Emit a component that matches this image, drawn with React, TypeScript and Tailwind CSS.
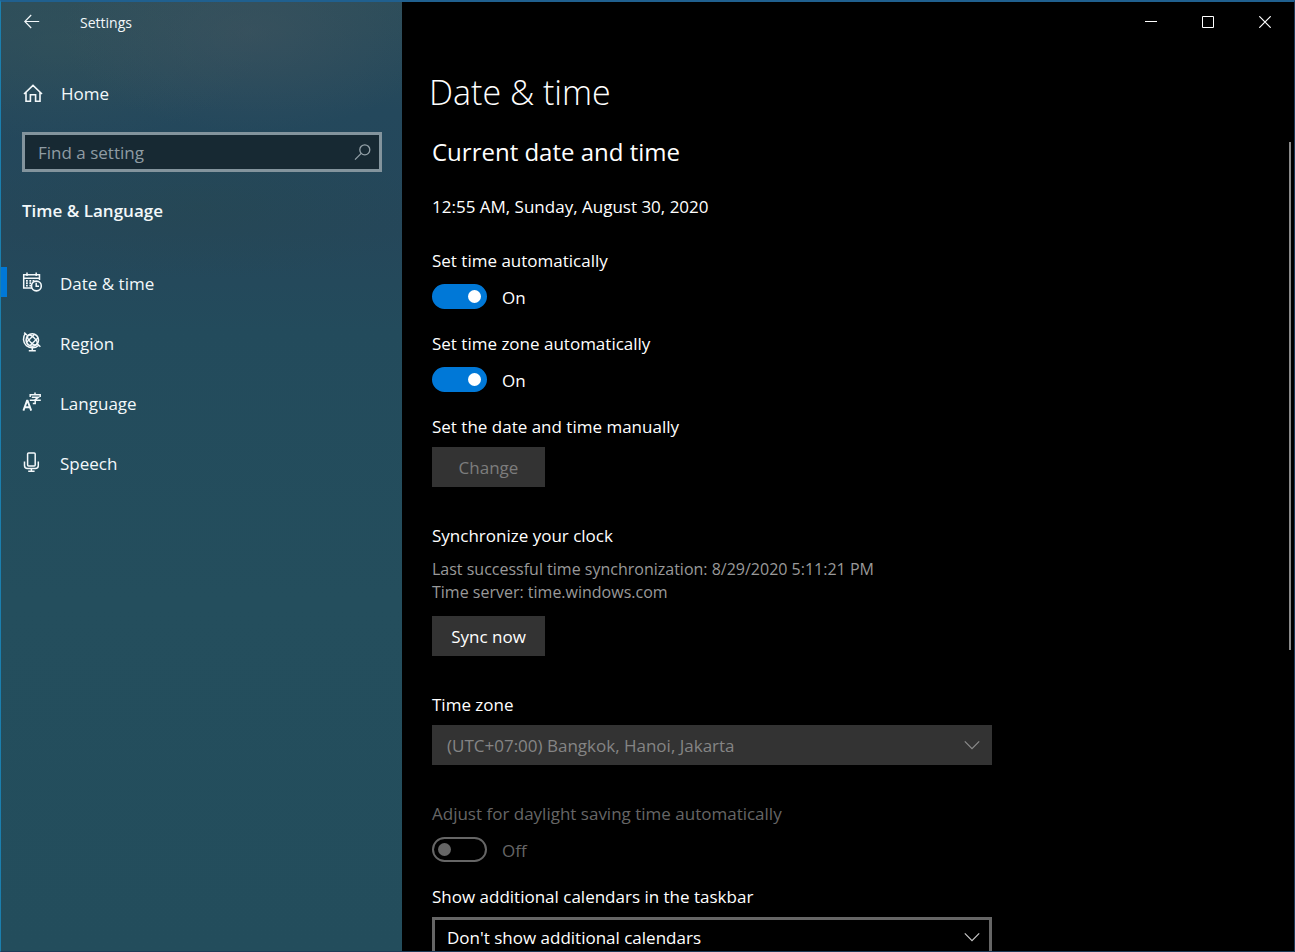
import type { ReactNode } from "react";

function Svg({ size, children }: { size: number; children: ReactNode }) {
  return (
    <svg
      width={size}
      height={size}
      viewBox={`0 0 ${size} ${size}`}
      fill="none"
      stroke="currentColor"
      aria-hidden="true"
      className="shrink-0"
    >
      {children}
    </svg>
  );
}

const BackIcon = () => (
  <Svg size={16}>
    <path d="M15.2 7.5H.8M7.2 1L.8 7.5 7.2 14" strokeWidth="1.2" />
  </Svg>
);

const HomeIcon = () => (
  <Svg size={20}>
    <path d="M1 10L10 1.4l9 8.6M3 8.4V17.2h4.4v-6.4h5.2v6.4H17V8.4" strokeWidth="1.6" />
  </Svg>
);

const SearchIcon = () => (
  <Svg size={18}>
    <circle cx="11.8" cy="6.8" r="5" strokeWidth="1.3" />
    <path d="M8.2 10.4L2 16.6" strokeWidth="1.3" />
  </Svg>
);

const CalendarIcon = () => (
  <Svg size={20}>
    <path d="M10 16H1.7V2.7h15.8V8M1.7 6.2h15.8M5 .5v3.6M14.2 .5v3.6" strokeWidth="1.5" />
    <path
      d="M7.4 8.8h1.8M10.6 8.8h1.8M4 8.8h1.8M4 11.2h1.8M7.4 11.2h1.8M4 13.6h1.8M7.4 13.6h1.8"
      strokeWidth="1.7"
    />
    <circle cx="14.4" cy="14" r="4.9" strokeWidth="1.6" />
    <path d="M14.2 10.8v3.4h2.8" strokeWidth="1.5" />
  </Svg>
);

const GlobeIcon = () => (
  <Svg size={20}>
    <circle cx="10.3" cy="8" r="6.2" strokeWidth="1.6" />
    <g transform="rotate(-45 10.3 8)">
      <ellipse cx="10.3" cy="8" rx="2.8" ry="6.2" strokeWidth="1.4" />
      <path d="M4.6 5.6h11.4M4.6 10.4h11.4" strokeWidth="1.4" />
    </g>
    <path d="M3.4 1.4C.6 5 .8 10.6 4.4 13.6c3.6 3 9 3 12.4-.4M2.2 .6l2.8 2.6M15.2 11.8l3.2 3" strokeWidth="1.5" />
    <path d="M10.3 15.4v3M6.8 18.8h7" strokeWidth="1.5" />
  </Svg>
);

const LanguageIcon = () => (
  <Svg size={20}>
    <path d="M1.4 18.6L5 8.8h.6l3.6 9.8M2.8 15.2h5" strokeWidth="1.9" />
    <path d="M13 .6v2.2M8.2 5V2.8h10V5M9.8 5.2h6.6l-3.2 2.4v3.8h-2.4M7.8 8.2h11" strokeWidth="1.5" />
  </Svg>
);

const MicIcon = () => (
  <Svg size={20}>
    <rect x="5.6" y="1" width="7.6" height="13" rx="1" strokeWidth="1.5" />
    <path d="M2.5 9.4v4.2c0 1.8 1.2 3 3 3h7.8c1.8 0 3-1.2 3-3V9.4M9.4 16.6v2.6M6.2 19.2h6.4" strokeWidth="1.5" />
  </Svg>
);

const ChevronIcon = () => (
  <Svg size={16}>
    <path d="M.8 4.4L8 11.6l7.2-7.2" strokeWidth="1.2" />
  </Svg>
);

const navItems = [
  { label: "Date & time", icon: <CalendarIcon />, active: true },
  { label: "Region", icon: <GlobeIcon />, active: false },
  { label: "Language", icon: <LanguageIcon />, active: false },
  { label: "Speech", icon: <MicIcon />, active: false },
];

function Sidebar() {
  return (
    <aside className="flex w-[401px] shrink-0 flex-col bg-[#234c5c] bg-[radial-gradient(ellipse_190px_100px_at_250px_30px,#45566077,transparent),radial-gradient(ellipse_200px_100px_at_60px_40px,#37545a77,transparent),radial-gradient(ellipse_240px_70px_at_200px_205px,#27474c55,transparent),linear-gradient(to_bottom,#2c4d5a_0px,#24485c_110px,#25475a_230px,#234b5c_330px,#244e5d_600px,#234d5c_100%)] text-[#f3f8fa]">
      <header className="flex h-10 items-center">
        <button type="button" aria-label="Back" className="flex h-full items-center pr-10 pl-[23px]">
          <BackIcon />
        </button>
        <span className="pt-0.5 text-sm">Settings</span>
      </header>
      <a href="#home" className="mt-7 flex h-12 items-center gap-[18px] pl-[22px]">
        <HomeIcon />
        Home
      </a>
      <div className="mt-[14px] mr-5 ml-[21px] flex h-10 items-center border-[3px] border-[#83949d] bg-[#172933] pr-2 pl-[13px] text-[#94a1a8]">
        <input
          type="text"
          aria-label="Find a setting"
          placeholder="Find a setting"
          className="min-w-0 flex-1 bg-transparent pt-0.5 outline-none placeholder:text-[#8f9ca3]"
        />
        <SearchIcon />
      </div>
      <h2 className="mt-[27px] pl-[21px] font-semibold">Time &amp; Language</h2>
      <nav className="mt-[29px] flex flex-col">
        {navItems.map((item) => (
          <a
            key={item.label}
            href="#section"
            aria-current={item.active ? "page" : undefined}
            className="flex h-[60px] items-center"
          >
            <span className={item.active ? "h-[30px] w-[6px] bg-[#0078d7]" : "h-[30px] w-[6px]"} />
            <span className="flex items-center gap-[18px] pl-[15px]">
              {item.icon}
              <span className="pt-1">{item.label}</span>
            </span>
          </a>
        ))}
      </nav>
    </aside>
  );
}

function WindowControls() {
  const button = "flex h-10 w-[57px] items-center justify-center";
  return (
    <div className="flex justify-end pr-px">
      <button type="button" aria-label="Minimize" className={button}>
        <Svg size={12}>
          <path d="M0 5.5h12" />
        </Svg>
      </button>
      <button type="button" aria-label="Maximize" className={button}>
        <Svg size={12}>
          <path d="M.5 .5h11v11H.5z" />
        </Svg>
      </button>
      <button type="button" aria-label="Close" className={button}>
        <Svg size={12}>
          <path d="M.3 .3l11.4 11.4M11.7 .3L.3 11.7" strokeWidth="1.2" />
        </Svg>
      </button>
    </div>
  );
}

function Toggle({ id, label, on, disabled }: { id: string; label: string; on: boolean; disabled?: boolean }) {
  return (
    <div className={disabled ? "text-[#666666]" : ""}>
      <label htmlFor={id} className="block">
        {label}
      </label>
      <div className="mt-[11px] flex h-[25px] items-center gap-[15px]">
        <input
          id={id}
          type="checkbox"
          role="switch"
          defaultChecked={on}
          disabled={disabled}
          className="flex h-[25px] w-[55px] appearance-none items-center rounded-full border-2 border-white px-1 before:size-[13px] before:rounded-full before:bg-white checked:justify-end checked:border-[#0078d7] checked:bg-[#0078d7] disabled:border-[#666666] disabled:before:bg-[#666666]"
        />
        <span className="pt-0.5">{on ? "On" : "Off"}</span>
      </div>
    </div>
  );
}

function Dropdown({ id, label, value, disabled }: { id: string; label: string; value: string; disabled?: boolean }) {
  return (
    <div>
      <label htmlFor={id} className="block">
        {label}
      </label>
      <div className={disabled ? "relative mt-2 text-[#858585]" : "relative mt-2"}>
        <select
          id={id}
          disabled={disabled}
          className="h-10 w-full appearance-none border-[3px] border-[#666666] bg-black px-3 pt-0.5 opacity-100 disabled:border-[#333333] disabled:bg-[#333333]"
        >
          <option>{value}</option>
        </select>
        <span
          className={
            disabled
              ? "pointer-events-none absolute inset-y-0 right-3 flex items-center text-[#8c8c8c]"
              : "pointer-events-none absolute inset-y-0 right-3 flex items-center text-[#c8c8c8]"
          }
        >
          <ChevronIcon />
        </span>
      </div>
    </div>
  );
}

export default function App() {
  return (
    <div className="relative flex h-screen overflow-hidden border border-t-2 border-[#1d3a58] border-t-[#20608f] border-l-[#1b7fae] bg-black font-['Open_Sans','Noto_Sans',sans-serif] text-[17px] leading-6 text-white">
      <Sidebar />
      <main className="min-w-0 flex-1">
        <WindowControls />
        <div className="max-w-[590px] pt-[26px] pl-[30px]">
          <h1 className="-ml-[3px] text-[34px] leading-[48px] font-light">Date &amp; time</h1>
          <h2 className="mt-5 text-2xl leading-8">Current date and time</h2>
          <p className="mt-[27px]">12:55 AM, Sunday, August 30, 2020</p>
          <div className="mt-[30px] flex flex-col gap-[23px]">
            <Toggle id="auto-time" label="Set time automatically" on />
            <Toggle id="auto-zone" label="Set time zone automatically" on />
            <div>
              <p>Set the date and time manually</p>
              <button type="button" disabled className="mt-2 h-10 w-[113px] bg-[#333333] pt-0.5 text-[#7d7d7d]">
                Change
              </button>
            </div>
          </div>
          <div className="mt-[37px]">
            <h3>Synchronize your clock</h3>
            <p className="mt-[10px] text-base leading-[23px] text-[#999999]">
              Last successful time synchronization: 8/29/2020 5:11:21 PM
              <br />
              Time server: time.windows.com
            </p>
            <button type="button" className="mt-3 h-10 w-[113px] bg-[#333333] pt-0.5">
              Sync now
            </button>
          </div>
          <div className="mt-[37px]">
            <Dropdown id="zone" label="Time zone" value="(UTC+07:00) Bangkok, Hanoi, Jakarta" disabled />
          </div>
          <div className="mt-[37px] flex flex-col gap-[23px]">
            <Toggle id="dst" label="Adjust for daylight saving time automatically" on={false} disabled />
            <Dropdown
              id="calendars"
              label="Show additional calendars in the taskbar"
              value="Don't show additional calendars"
            />
          </div>
        </div>
      </main>
      <div className="absolute top-[140px] right-[3px] h-[508px] w-[2px] bg-[#8a8a8a]" />
    </div>
  );
}
